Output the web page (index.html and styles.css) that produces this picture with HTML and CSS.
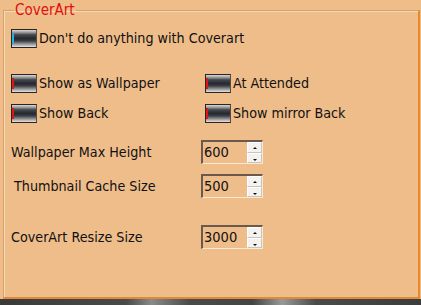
FILE: index.html
```html
<!DOCTYPE html>
<html>
<head>
<meta charset="utf-8">
<link rel="stylesheet" href="styles.css">
</head>
<body>
<div class="page">
  <fieldset class="group">
    <legend class="title">CoverArt</legend>
    <div class="opt first">
      <span class="toggle cyan"></span><span class="lbl">Don't do anything with Coverart</span>
    </div>
    <div class="grid">
      <div class="opt"><span class="toggle red"></span><span class="lbl">Show as Wallpaper</span></div>
      <div class="opt"><span class="toggle red"></span><span class="lbl">At Attended</span></div>
      <div class="opt"><span class="toggle red"></span><span class="lbl">Show Back</span></div>
      <div class="opt"><span class="toggle red"></span><span class="lbl">Show mirror Back</span></div>
    </div>
    <div class="field f1">
      <span class="flabel">Wallpaper Max Height</span>
      <div class="spin"><span class="val">600</span><span class="btns"><span class="b up"></span><span class="b down"></span></span></div>
    </div>
    <div class="field f2">
      <span class="flabel indent">Thumbnail Cache Size</span>
      <div class="spin"><span class="val">500</span><span class="btns"><span class="b up"></span><span class="b down"></span></span></div>
    </div>
    <div class="field f3">
      <span class="flabel">CoverArt Resize Size</span>
      <div class="spin"><span class="val">3000</span><span class="btns"><span class="b up"></span><span class="b down"></span></span></div>
    </div>
  </fieldset>
  <div class="bar"></div>
</div>
</body>
</html>
```
FILE: styles.css
```css
html, body {
  margin: 0;
  padding: 0;
  width: 421px;
  height: 305px;
  overflow: hidden;
  background: #efbd89;
}
.page {
  width: 421px;
  height: 305px;
  display: flex;
  flex-direction: column;
  font-family: "DejaVu Sans Condensed", "DejaVu Sans", sans-serif;
  font-size: 14.2px;
  color: #111;
}
.group {
  box-sizing: border-box;
  margin: 2px 1px 0 3px;
  height: 297px;
  padding: 0 0 0 7px;
  border: 1px solid #d7a06a;
  border-right: 2px solid #e98a2a;
  border-bottom: 2px solid #e0893a;
  box-shadow: inset 1px 1px 0 #f7d9b6;
  display: flex;
  flex-direction: column;
}
.title {
  color: #e01010;
  padding: 0 1px;
  margin-left: 3px;
  font-size: 15px;
  line-height: 16px;
}
.opt {
  display: flex;
  align-items: center;
  height: 20px;
}
.opt.first {
  margin-top: 10px;
}
.grid {
  margin-top: 25px;
  display: grid;
  grid-template-columns: 194px 1fr;
  row-gap: 10px;
}
.toggle {
  box-sizing: border-box;
  width: 26px;
  height: 19px;
  border: 1px solid #2b2420;
  border-right-color: #5a4a40;
  position: relative;
  background: linear-gradient(to bottom, #d8d8d8 0%, #9a9a9a 14%, #44484e 28%, #262a30 50%, #3a3e44 64%, #8a8a8a 80%, #e4e4e4 100%);
  margin-right: 2px;
  flex: none;
}
.toggle::before {
  content: "";
  position: absolute;
  left: 0;
  top: 3px;
  bottom: 3px;
  width: 2px;
}
.toggle.cyan::before { background: #2ab0e0; }
.toggle.red::before { background: #d81818; }
.lbl {
  white-space: nowrap;
}
.field {
  display: flex;
  align-items: center;
}
.f1 { margin-top: 17px; }
.f2 { margin-top: 10px; }
.f3 { margin-top: 27px; }
.flabel {
  width: 190px;
  white-space: nowrap;
}
.flabel.indent { padding-left: 3px; width: 187px; }
.spin {
  box-sizing: border-box;
  width: 62px;
  height: 24px;
  display: flex;
  border-top: 2px solid #6a5a4c;
  border-left: 2px solid #6a5a4c;
  border-bottom: 1px solid #fbe8d2;
  border-right: 1px solid #fbe8d2;
  background: #efbd89;
}
.val {
  flex: 1;
  font-size: 14.5px;
  line-height: 21px;
  padding-left: 1px;
}
.btns {
  width: 15px;
  display: flex;
  flex-direction: column;
}
.b {
  flex: 1;
  box-sizing: border-box;
  background: #f4f2ee;
  border: 1px solid #c8c4bc;
  border-top-color: #ffffff;
  border-left-color: #ffffff;
  position: relative;
}
.b::after {
  content: "";
  position: absolute;
  left: 5px;
  top: 4px;
  width: 0;
  height: 0;
  border-left: 2px solid transparent;
  border-right: 2px solid transparent;
}
.b.up::after { border-bottom: 2px solid #111; }
.b.down::after { border-top: 2px solid #111; top: 5px; }
.bar {
  height: 6px;
  margin-top: 0;
  background: linear-gradient(to right, #3a3a3a 0%, #4a4a4a 30%, #8a8a8a 36%, #4a4a4a 45%, #444 60%, #999 67%, #4a4a4a 75%, #3c3c3c 100%);
}
```
